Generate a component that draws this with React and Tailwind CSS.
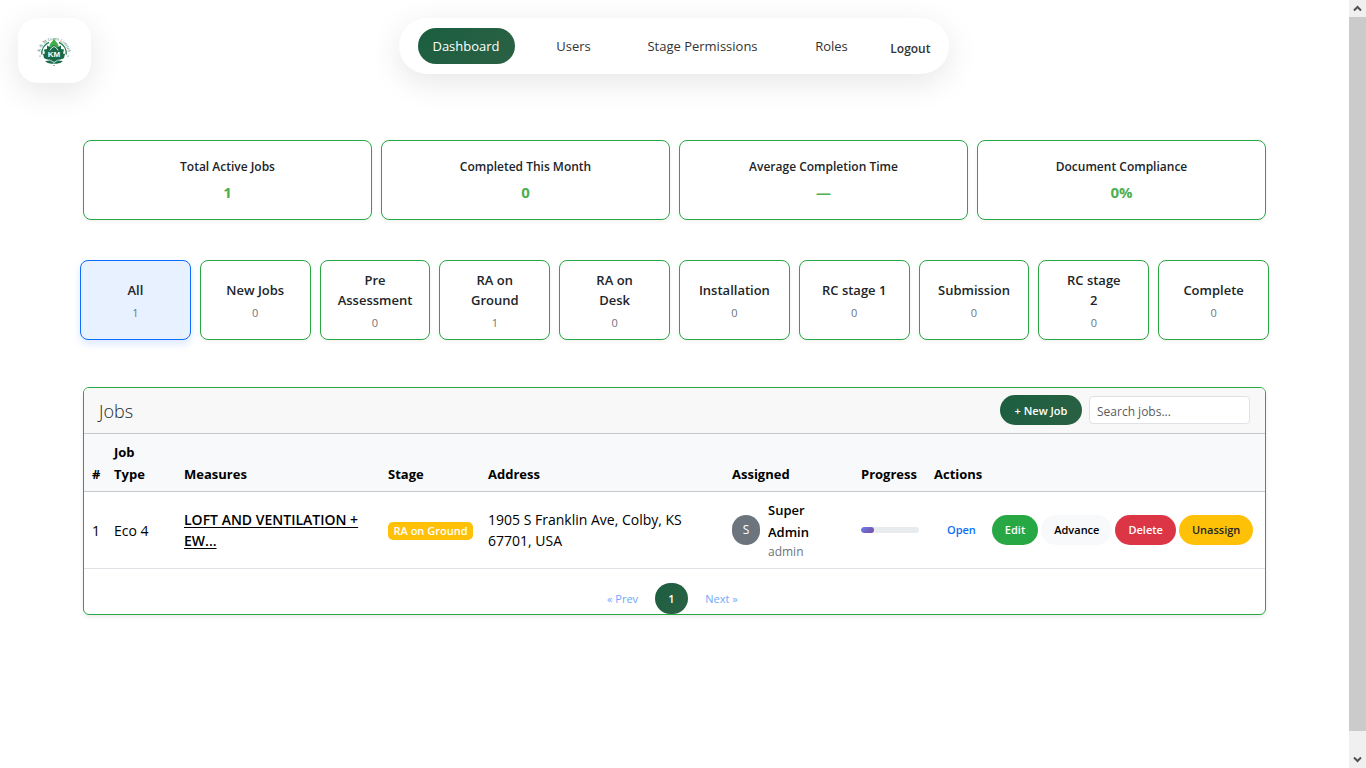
import React from "react";

const stats = [
  ["Total Active Jobs", "1"],
  ["Completed This Month", "0"],
  ["Average Completion Time", "—"],
  ["Document Compliance", "0%"],
];

const stages = [
  ["All", 1],
  ["New Jobs", 0],
  ["Pre\nAssessment", 0],
  ["RA on\nGround", 1],
  ["RA on\nDesk", 0],
  ["Installation", 0],
  ["RC stage 1", 0],
  ["Submission", 0],
  ["RC stage\n2", 0],
  ["Complete", 0],
];

const columns = [
  ["#", "w-[22px]"],
  ["Job Type", "w-[70px]"],
  ["Measures", "w-[204px]"],
  ["Stage", "w-[100px]"],
  ["Address", ""],
  ["Assigned", "w-[129px]"],
  ["Progress", "w-[73px]"],
  ["Actions", "w-[339px]"],
];

const actions = [
  ["Open", "text-[#0d6efd]"],
  ["Edit", "bg-[#28a745] text-white"],
  ["Advance", "bg-[#f8f9fa] text-black"],
  ["Delete", "bg-[#dc3545] text-white"],
  ["Unassign", "bg-[#ffc107] text-[#212529]"],
];

function Logo() {
  return (
    <svg viewBox="0 0 44 38" className="h-[38px] w-11 overflow-visible" role="img" aria-label="K & M Green Limited">
      <defs>
        <path id="logo-arc" d="M7 22 A14 14 0 0 1 35 22" />
      </defs>
      <text fontSize="4.400" fill="#3a705a" fontFamily="Liberation Serif, serif">
        <textPath href="#logo-arc" startOffset="50%" textAnchor="middle">K &amp; M Green Limited</textPath>
      </text>
      <path d="M8.800 22.500 A12.300 12.300 0 0 1 16 10.300 M26 10.300 A12.300 12.300 0 0 1 33.200 22.500" fill="none" stroke="#1f7a50" strokeWidth="1.400" />
      <path d="M21 6.500 C22 9.500 25.500 11 25.500 14.500 L23.500 18 H18.500 L16.500 14.500 C16.500 11 20 9.500 21 6.500 Z" fill="#3fae49" />
      <path d="M21 13 L24 15.500 L28 13.500 L28 17 L31 17.500 L30 21.500 L32 22 L31 26 L26.500 28.500 L21 31 L15.500 28.500 L11 26 L10 22 L12 21.500 L11 17.500 L14 17 L14 13.500 L18 15.500 Z" fill="#176b48" />
      <path d="M17 18.500 Q18 15.500 21 14.500 Q24 15.500 25 18.500" fill="none" stroke="#e5f3eb" strokeWidth="0.9" />
      <path d="M12 29 Q17.500 28 21 31 Q24.500 28 30 29 Q27 32.500 21 31.500 Q15 32.500 12 29 Z" fill="#176b48" />
      <path d="M12.500 27.500 Q18 27.500 21 30.500 Q24 27.500 29.500 27.500" fill="none" stroke="#fff" strokeWidth="0.7" />
      <circle cx="7" cy="24" r="0.600" fill="#176b48" />
      <circle cx="35" cy="24" r="0.600" fill="#176b48" />
      <circle cx="21" cy="33.500" r="0.600" fill="#176b48" />
      <text x="21" y="25.300" fontSize="8" fontWeight="700" textAnchor="middle" fill="#fff" fontFamily="Liberation Sans, sans-serif">KM</text>
    </svg>
  );
}

function Chevron({ up }) {
  return (
    <svg viewBox="0 0 17 17" className="size-[17px]" aria-hidden="true">
      <path d={up ? "M5 10.500 L8.500 7 L12 10.500" : "M5 6.500 L8.500 10 L12 6.500"} fill="none" stroke="#505050" strokeWidth="2" />
    </svg>
  );
}

export default function App() {
  return (
    <div className="flex min-h-screen bg-white font-['Open_Sans','Noto_Sans',sans-serif] text-[#212529]">
      <div className="min-w-0 flex-1">
        <header className="grid h-[140px] grid-cols-[1fr_auto_1fr] items-start pt-[18px] pr-5 pl-[18px]">
          <a href="#home" className="flex h-[65px] w-[73px] items-center justify-center rounded-[20px] bg-white shadow-[0_8px_32px_rgba(0,0,0,0.1)]">
            <Logo />
          </a>
          <nav className="flex h-14 w-[550px] items-center rounded-[28px] bg-white pr-[18px] pl-[19px] text-[13px] text-[#333] shadow-[0_8px_32px_rgba(0,0,0,0.1)]">
            <a href="#dashboard" className="flex h-9 w-[97px] items-center justify-center rounded-[18px] bg-linear-135 from-[#1b5e40] to-[#2b6144] pt-0.5 text-white">Dashboard</a>
            <a href="#users" className="ml-7 flex h-9 w-[62px] items-center justify-center pt-0.5">Users</a>
            <a href="#permissions" className="ml-7 flex h-9 w-[140px] items-center justify-center pt-0.5">Stage Permissions</a>
            <a href="#roles" className="ml-7 flex h-9 w-[62px] items-center justify-center pt-0.5">Roles</a>
            <button type="button" className="ml-auto pt-[6px] text-[12px] font-semibold">Logout</button>
          </nav>
        </header>

        <main className="px-20">
          <section className="grid grid-cols-4 gap-[9px] px-[3px]">
            {stats.map(([label, value]) => (
              <div key={label} className="flex h-20 flex-col items-center rounded-lg border border-[#28a745] pt-4 shadow-[0_2px_4px_rgba(0,0,0,0.05)]">
                <div className="text-[12px] leading-5 font-semibold">{label}</div>
                <div className="mt-[3px] text-[15px] leading-6 font-bold text-[#4caf50]">{value}</div>
              </div>
            ))}
          </section>

          <section className="mt-10 grid grid-cols-10 gap-[9px]">
            {stages.map(([label, count], i) => (
              <button
                type="button"
                key={label}
                className={
                  "flex h-20 flex-col items-center justify-center rounded-lg border px-2 pt-0.5 " +
                  (i === 0
                    ? "border-[#0d6efd] bg-[#e7f1ff] shadow-[0_4px_8px_rgba(13,110,253,0.15)]"
                    : "border-[#28a745] bg-white shadow-[0_2px_4px_rgba(0,0,0,0.05)]")
                }
              >
                <span className="text-[13px] leading-5 font-semibold whitespace-pre-line">{label}</span>
                <span className="mt-1 text-[11px] leading-[18px] text-[#6c757d]">{count}</span>
              </button>
            ))}
          </section>

          <section className="mx-[3px] mt-[47px] overflow-hidden rounded-md border border-[#28a745] shadow-[0_2px_4px_rgba(0,0,0,0.08)]">
            <div className="flex h-[46px] items-center border-b border-[#c6c9cc] bg-[#f8f8f8] pr-[15px] pb-px pl-[15px]">
              <h1 className="flex-1 pt-0.5 text-[18px] leading-6 font-light">Jobs</h1>
              <button type="button" className="h-[30px] w-[82px] rounded-full bg-linear-135 from-[#1b5e40] to-[#2b6144] pt-0.5 text-[11px] font-semibold text-white">+ New Job</button>
              <input type="search" aria-label="Search jobs" placeholder="Search jobs..." className="ml-[7px] h-7 w-[161px] rounded-[4px] border border-[#dee2e6] bg-white px-[7px] pt-0.5 text-[12px] placeholder:text-[#595c5f]" />
            </div>

            <table className="w-full table-fixed text-left text-[14px] text-black">
              <thead>
                <tr className="h-[57px] border-b border-[#c6c9cc] bg-[#f8f9fa] text-[13px]">
                  {columns.map(([name, width]) => (
                    <th key={name} className={"px-2 py-[6px] align-bottom leading-[22px] font-bold " + width}>{name}</th>
                  ))}
                </tr>
              </thead>
              <tbody>
                <tr className="h-[77px] border-b border-[#dee2e6]">
                  <td className="px-2 pt-0.5">1</td>
                  <td className="px-2 pt-0.5">Eco 4</td>
                  <td className="px-2 leading-[21px] font-semibold">
                    <a href="#job" className="underline underline-offset-2">LOFT AND VENTILATION + EW...</a>
                  </td>
                  <td className="px-2 pt-0.5">
                    <span className="flex h-[18px] w-[85px] items-center justify-center rounded-[5px] bg-[#ffc107] pt-0.5 text-[11px] font-semibold whitespace-nowrap text-white">RA on Ground</span>
                  </td>
                  <td className="py-0 pr-8 pl-2 leading-[21px]">1905 S Franklin Ave, Colby, KS 67701, USA</td>
                  <td className="px-2">
                    <div className="flex items-center gap-2">
                      <span className="flex h-[30px] w-7 shrink-0 items-center justify-center rounded-full bg-[#6c757d] text-[12px] text-white">S</span>
                      <div className="w-14">
                        <div className="text-[13px] leading-[22px] font-semibold">Super Admin</div>
                        <div className="text-[12px] leading-[18px] text-[#6c757d]">admin</div>
                      </div>
                    </div>
                  </td>
                  <td className="px-2">
                    <div className="h-1.5 w-[58px] overflow-hidden rounded-full bg-[#e9ecef]">
                      <div className="h-full w-[13px] rounded-full bg-linear-135 from-[#667eea] to-[#764ba2]" />
                    </div>
                  </td>
                  <td className="px-2">
                    <div className="flex gap-[3px]">
                      {actions.map(([name, tone]) => (
                        <button type="button" key={name} className={"h-[30px] rounded-full px-[13px] pt-0.5 text-[11px] font-semibold " + tone}>{name}</button>
                      ))}
                    </div>
                  </td>
                </tr>
              </tbody>
            </table>

            <div className="flex justify-center pt-[14px] pr-1 text-[11px] text-[#6ea8fe]">
              <button type="button" className="h-[31px] w-[65px] pt-0.5">« Prev</button>
              <button type="button" className="h-[31px] w-[33px] rounded-full bg-linear-135 from-[#1b5e40] to-[#2b6144] pt-0.5 font-semibold text-white">1</button>
              <button type="button" className="h-[31px] w-[67px] pt-0.5">Next »</button>
            </div>
          </section>
        </main>
      </div>

      <aside className="sticky top-0 flex h-screen w-[17px] flex-col bg-[#f0f0f0]" aria-hidden="true">
        <Chevron up />
        <div className="min-h-0 flex-1 pb-5">
          <div className="h-full bg-[#cbcbcb]" />
        </div>
        <Chevron />
      </aside>
    </div>
  );
}
